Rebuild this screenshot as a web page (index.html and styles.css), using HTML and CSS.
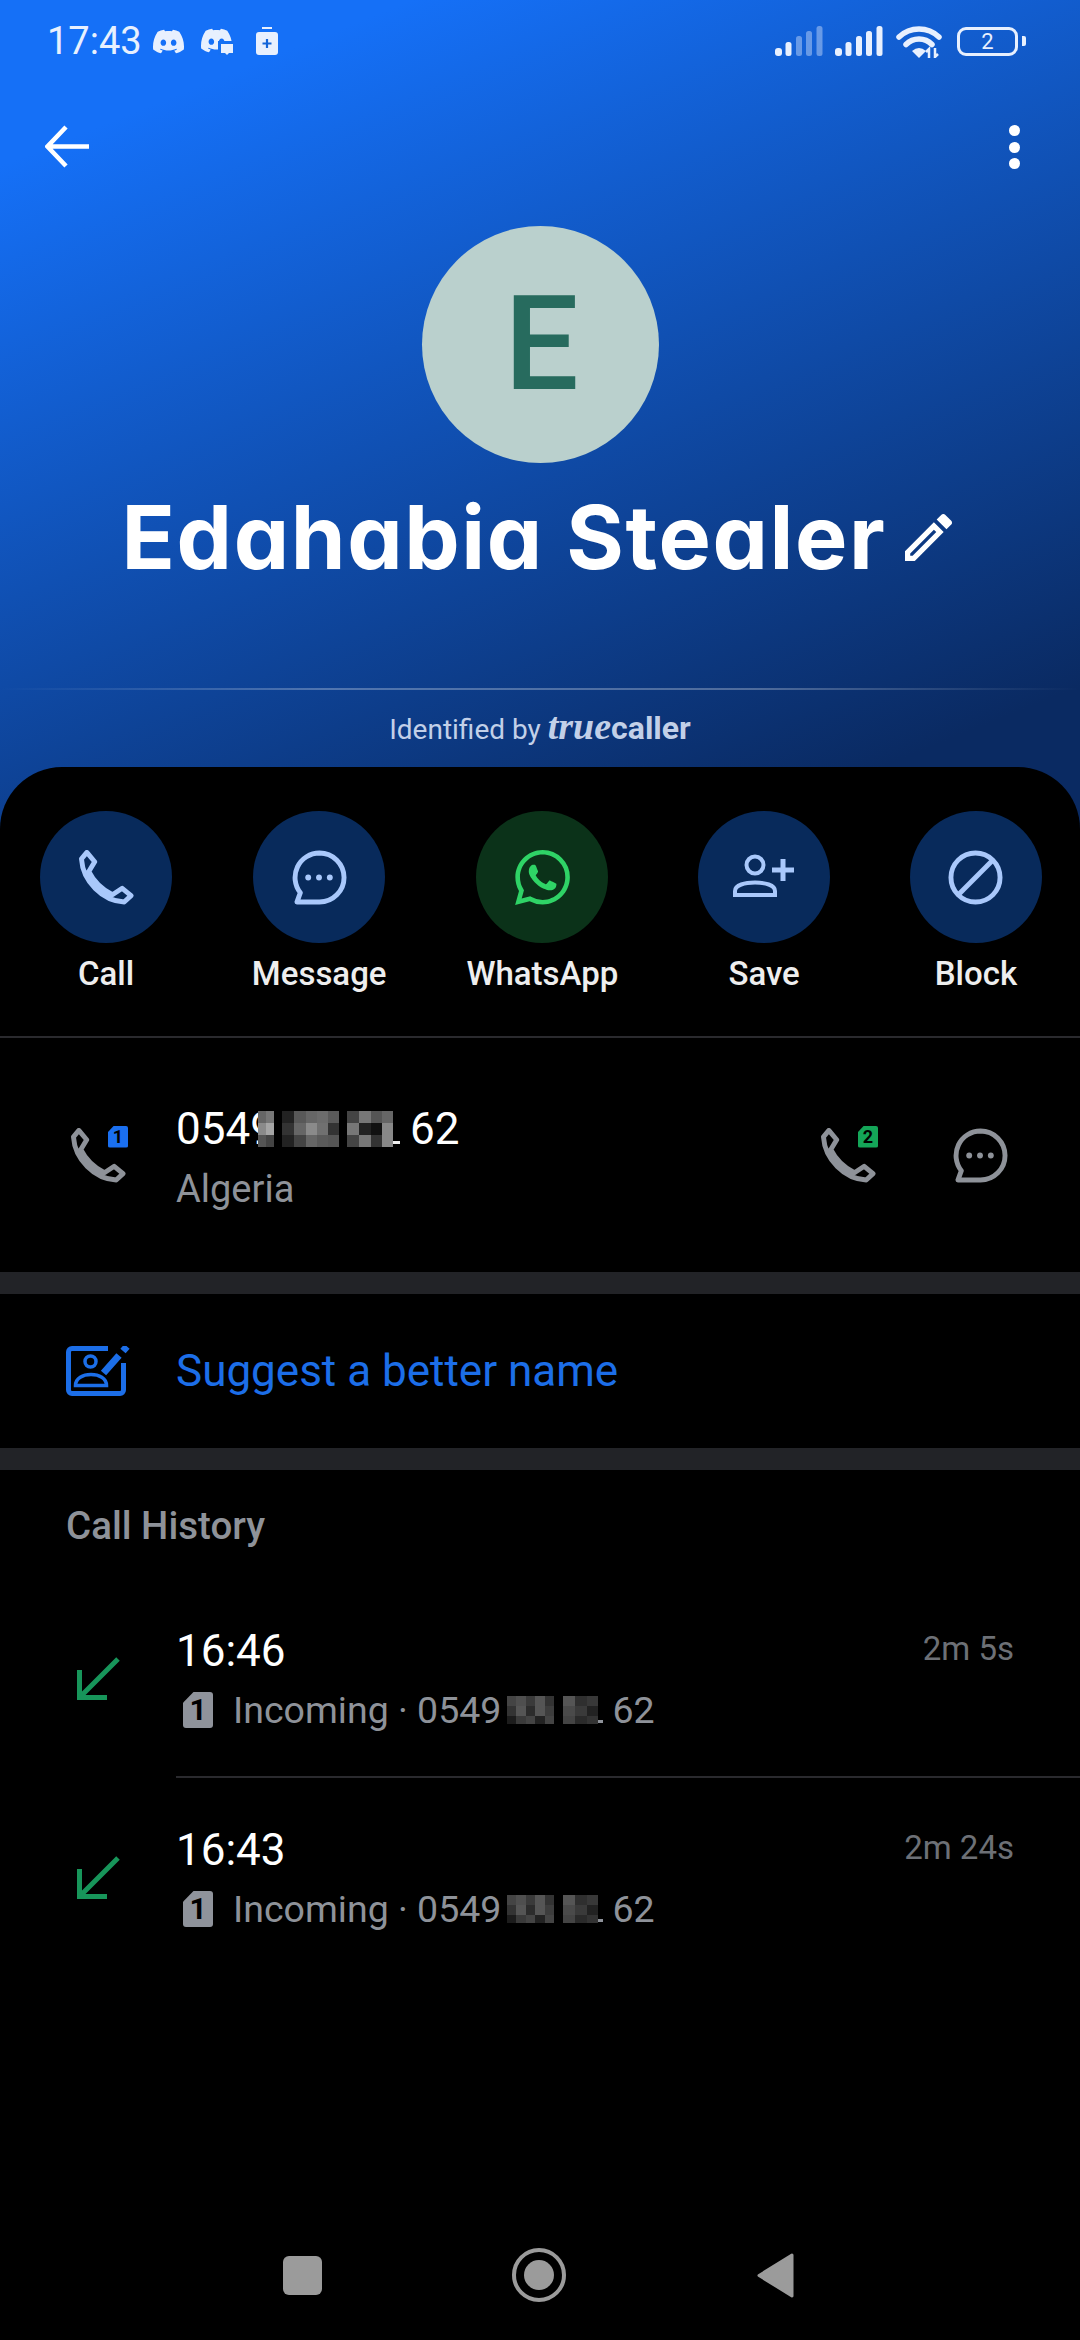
FILE: index.html
```html
<!DOCTYPE html>
<html lang="en">
<head>
    <meta charset="UTF-8">
    <title>Edahabia Stealer</title>
    <link rel="stylesheet" href="styles.css">
</head>
<body>
<svg class="sprite" xmlns="http://www.w3.org/2000/svg">
    <symbol id="phone" viewBox="0 0 56 56">
        <path d="M8 2.5L16 12L10 22C15 32 23 40 34 45.500L44 39L53 46.500L46 53C24 52 4 32 2.500 9Z" fill="none" stroke="currentColor" stroke-width="5" stroke-linejoin="round"/>
    </symbol>
    <symbol id="bubble" viewBox="0 0 56 56">
        <path d="M28 3A25 25 0 0 1 28 53L5 53L8.500 43.500A25 25 0 0 1 28 3Z" fill="none" stroke="currentColor" stroke-width="5" stroke-linejoin="round"/>
        <circle cx="16.500" cy="28" r="3" fill="currentColor"/>
        <circle cx="27.500" cy="28" r="3" fill="currentColor"/>
        <circle cx="38.500" cy="28" r="3" fill="currentColor"/>
    </symbol>
    <symbol id="discord" viewBox="0 0 24 24">
        <path fill="currentColor" d="M20.317 4.3698a19.7913 19.7913 0 00-4.8851-1.5152.0741.0741 0 00-.0785.0371c-.211.3753-.4447.8648-.6083 1.2495-1.8447-.2762-3.68-.2762-5.4868 0-.1636-.3933-.4058-.8742-.6177-1.2495a.077.077 0 00-.0785-.037 19.7363 19.7363 0 00-4.8852 1.515.0699.0699 0 00-.0321.0277C.5334 9.0458-.319 13.5799.0992 18.0578a.0824.0824 0 00.0312.0561c2.0528 1.5076 4.0413 2.4228 5.9929 3.0294a.0777.0777 0 00.0842-.0276c.4616-.6304.8731-1.2952 1.226-1.9942a.076.076 0 00-.0416-.1057c-.6528-.2476-1.2743-.5495-1.8722-.8923a.077.077 0 01-.0076-.1277c.1258-.0943.2517-.1923.3718-.2914a.0743.0743 0 01.0776-.0105c3.9278 1.7933 8.18 1.7933 12.0614 0a.0739.0739 0 01.0785.0095c.1202.099.246.1981.3728.2924a.077.077 0 01-.0066.1276 12.2986 12.2986 0 01-1.873.8914.0766.0766 0 00-.0407.1067c.3604.698.7719 1.3628 1.225 1.9932a.076.076 0 00.0842.0286c1.961-.6067 3.9495-1.5219 6.0023-3.0294a.077.077 0 00.0313-.0552c.5004-5.177-.8382-9.6739-3.5485-13.6604a.061.061 0 00-.0312-.0286zM8.02 15.3312c-1.1825 0-2.1569-1.0857-2.1569-2.419 0-1.3332.9555-2.4189 2.157-2.4189 1.2108 0 2.1757 1.0952 2.1568 2.419 0 1.3332-.9555 2.4189-2.1569 2.4189zm7.9748 0c-1.1825 0-2.1569-1.0857-2.1569-2.419 0-1.3332.9554-2.4189 2.1569-2.4189 1.2108 0 2.1757 1.0952 2.1568 2.419 0 1.3332-.946 2.4189-2.1568 2.4189Z"/>
    </symbol>
    <symbol id="bars" viewBox="0 0 48 30">
        <rect x="0" y="22" width="7" height="8" rx="3"/>
        <rect x="10.500" y="16" width="6" height="14" rx="2.500"/>
        <rect class="bar-dim" x="21" y="10" width="6" height="20" rx="2.500"/>
        <rect class="bar-dim" x="31" y="5" width="6" height="25" rx="2.500"/>
        <rect class="bar-dim" x="41.500" y="0" width="6" height="30" rx="2.500"/>
    </symbol>
    <symbol id="mosaic-big" viewBox="0 0 142 36">
        <rect x="0" y="0" width="8" height="12" fill="#666"/><rect x="8" y="0" width="8" height="12" fill="#777"/>
        <rect x="0" y="12" width="8" height="12" fill="#8a8a8a"/><rect x="8" y="12" width="8" height="12" fill="#a5a5a5"/>
        <rect x="0" y="24" width="8" height="12" fill="#555"/><rect x="8" y="24" width="8" height="12" fill="#444"/>
        <rect x="24" y="0" width="12" height="12" fill="#222"/><rect x="36" y="0" width="12" height="12" fill="#585858"/><rect x="48" y="0" width="11" height="12" fill="#666"/><rect x="59" y="0" width="11" height="12" fill="#6c6c6c"/><rect x="70" y="0" width="11" height="12" fill="#5a5a5a"/>
        <rect x="24" y="12" width="12" height="12" fill="#333"/><rect x="36" y="12" width="12" height="12" fill="#666"/><rect x="48" y="12" width="11" height="12" fill="#8a8a8a"/><rect x="59" y="12" width="11" height="12" fill="#707070"/><rect x="70" y="12" width="11" height="12" fill="#333"/>
        <rect x="24" y="24" width="12" height="12" fill="#222"/><rect x="36" y="24" width="12" height="12" fill="#444"/><rect x="48" y="24" width="11" height="12" fill="#666"/><rect x="59" y="24" width="11" height="12" fill="#5a5a5a"/><rect x="70" y="24" width="11" height="12" fill="#555"/>
        <rect x="89" y="0" width="12" height="12" fill="#444"/><rect x="101" y="0" width="12" height="12" fill="#777"/><rect x="113" y="0" width="11" height="12" fill="#555"/><rect x="124" y="0" width="11" height="12" fill="#666"/>
        <rect x="89" y="12" width="12" height="12" fill="#777"/><rect x="101" y="12" width="12" height="12" fill="#222"/><rect x="113" y="12" width="11" height="12" fill="#111"/><rect x="124" y="12" width="11" height="12" fill="#888"/>
        <rect x="89" y="24" width="12" height="12" fill="#444"/><rect x="101" y="24" width="12" height="12" fill="#777"/><rect x="113" y="24" width="11" height="12" fill="#333"/><rect x="124" y="24" width="11" height="12" fill="#888"/>
        <rect x="135" y="30" width="7" height="3" fill="#eee"/>
    </symbol>
    <symbol id="mosaic-small" viewBox="0 0 96 28">
        <rect x="0" y="0" width="9" height="10" fill="#444"/><rect x="9" y="0" width="10" height="10" fill="#4f4f4f"/><rect x="19" y="0" width="9" height="10" fill="#3a3a3a"/><rect x="28" y="0" width="10" height="10" fill="#555"/><rect x="38" y="0" width="9" height="10" fill="#333"/>
        <rect x="0" y="10" width="9" height="10" fill="#333"/><rect x="9" y="10" width="10" height="10" fill="#555"/><rect x="19" y="10" width="9" height="10" fill="#2c2c2c"/><rect x="28" y="10" width="10" height="10" fill="#555"/><rect x="38" y="10" width="9" height="10" fill="#3d3d3d"/>
        <rect x="0" y="20" width="9" height="8" fill="#1c1c1c"/><rect x="9" y="20" width="10" height="8" fill="#3a3a3a"/><rect x="19" y="20" width="9" height="8" fill="#444"/><rect x="28" y="20" width="10" height="8" fill="#222"/><rect x="38" y="20" width="9" height="8" fill="#444"/>
        <rect x="56" y="0" width="12" height="10" fill="#555"/><rect x="68" y="0" width="12" height="10" fill="#2f2f2f"/><rect x="80" y="0" width="11" height="10" fill="#383838"/>
        <rect x="56" y="10" width="12" height="10" fill="#4a4a4a"/><rect x="68" y="10" width="12" height="10" fill="#3a3a3a"/><rect x="80" y="10" width="11" height="10" fill="#222"/>
        <rect x="56" y="20" width="12" height="8" fill="#444"/><rect x="68" y="20" width="12" height="8" fill="#2a2a2a"/><rect x="80" y="20" width="11" height="8" fill="#333"/>
        <rect x="91" y="24" width="5" height="3" fill="#8f939b"/>
    </symbol>
</svg>

<div class="page">
    <div class="status">
        <span class="clock">17:43</span>
        <svg class="ic-discord"><use href="#discord"/></svg>
        <svg class="ic-discord2" viewBox="0 0 33 27">
            <use href="#discord" width="31" height="31" y="-3"/>
            <path class="cut" d="M17 13h16v14h-16z"/>
            <path d="M20 16h12v9h-4l-2 2-2-2h-4z" fill="currentColor"/>
        </svg>
        <svg class="ic-saver" viewBox="0 0 22 28">
            <rect x="6" y="0" width="10" height="2" fill="currentColor"/>
            <rect x="0" y="5" width="22" height="23" rx="3" fill="currentColor"/>
            <path d="M11 12v9M6.500 16.500h9" stroke="#1465d8" stroke-width="2.200"/>
        </svg>
        <div class="status-right">
            <svg class="ic-bars weak"><use href="#bars"/></svg>
            <svg class="ic-bars"><use href="#bars"/></svg>
            <svg class="ic-wifi" viewBox="0 0 46 34">
                <path d="M3 13A29 29 0 0 1 43 13M10 20.500A18 18 0 0 1 36 20.500" fill="none" stroke="currentColor" stroke-width="5.500" stroke-linecap="round"/>
                <path d="M16 27Q23 21 30 27L23 34Z" fill="currentColor"/>
                <path d="M33 34V25L30 28M39 24V33L42 30" fill="none" stroke="currentColor" stroke-width="2.500"/>
            </svg>
            <div class="battery">2</div>
            <div class="battery-tip"></div>
        </div>
    </div>

    <div class="toolbar">
        <svg class="ic-back" viewBox="0 0 44 44">
            <path d="M21 2L2.500 21.500L21 41M3 21.500H44" fill="none" stroke="currentColor" stroke-width="4.500"/>
        </svg>
        <div class="dots"><i></i><i></i><i></i></div>
    </div>

    <div class="avatar">E</div>

    <div class="name-row">
        <h1 class="name">Edahabia Stealer</h1>
        <svg class="ic-pencil" viewBox="3 3 18 18">
            <path fill="currentColor" d="M3 17.250V21h3.750L17.810 9.940l-3.750-3.750L3 17.250zM5.920 19H5v-.92l9.060-9.060.92.92L5.920 19zM20.710 5.630l-2.340-2.340c-.39-.39-1.020-.39-1.410 0l-1.830 1.830 3.750 3.750 1.830-1.830c.39-.39.39-1.020 0-1.410z"/>
        </svg>
    </div>

    <div class="hairline"></div>

    <div class="identified">Identified by <span class="brand"><b class="brand-true">true</b><b class="brand-caller">caller</b></span></div>

    <div class="sheet">
        <div class="actions">
            <div class="action">
                <div class="disc"><svg class="ic-55"><use href="#phone"/></svg></div>
                <span>Call</span>
            </div>
            <div class="action">
                <div class="disc"><svg class="ic-55"><use href="#bubble"/></svg></div>
                <span>Message</span>
            </div>
            <div class="action">
                <div class="disc disc-green">
                    <svg class="ic-55" viewBox="0 0 24 24"><path fill="currentColor" d="M17.472 14.382c-.297-.149-1.758-.867-2.030-.967-.273-.099-.471-.148-.670.150-.197.297-.767.966-.940 1.164-.173.199-.347.223-.644.075-.297-.150-1.255-.463-2.390-1.475-.883-.788-1.480-1.761-1.653-2.059-.173-.297-.018-.458.130-.606.134-.133.298-.347.446-.520.149-.174.198-.298.298-.497.099-.198.050-.371-.025-.520-.075-.149-.669-1.612-.916-2.207-.242-.579-.487-.500-.669-.510-.173-.008-.371-.010-.570-.010-.198 0-.520.074-.792.372-.272.297-1.040 1.016-1.040 2.479 0 1.462 1.065 2.875 1.213 3.074.149.198 2.096 3.200 5.077 4.487.709.306 1.262.489 1.694.625.712.227 1.360.195 1.871.118.571-.085 1.758-.719 2.006-1.413.248-.694.248-1.289.173-1.413-.074-.124-.272-.198-.570-.347m-5.421 7.403h-.004a9.870 9.870 0 01-5.031-1.378l-.361-.214-3.741.982.998-3.648-.235-.374a9.860 9.860 0 01-1.510-5.260c.001-5.450 4.436-9.884 9.888-9.884 2.640 0 5.122 1.030 6.988 2.898a9.825 9.825 0 012.893 6.994c-.003 5.450-4.437 9.884-9.885 9.884m8.413-18.297A11.815 11.815 0 0012.050 0C5.495 0 .160 5.335.157 11.892c0 2.096.547 4.142 1.588 5.945L.057 24l6.305-1.654a11.882 11.882 0 005.683 1.448h.005c6.554 0 11.890-5.335 11.893-11.893a11.821 11.821 0 00-3.480-8.413z"/></svg>
                </div>
                <span>WhatsApp</span>
            </div>
            <div class="action">
                <div class="disc">
                    <svg class="ic-save" viewBox="0 0 62 46">
                        <circle cx="22" cy="11" r="8.500" fill="none" stroke="currentColor" stroke-width="4"/>
                        <path d="M2 41V37C2 31 12 28.500 22 28.500C32 28.500 42 31 42 37V41Z" fill="none" stroke="currentColor" stroke-width="4"/>
                        <path d="M39 16H61M50 5V27" fill="none" stroke="currentColor" stroke-width="5"/>
                    </svg>
                </div>
                <span>Save</span>
            </div>
            <div class="action">
                <div class="disc">
                    <svg class="ic-55" viewBox="0 0 56 56">
                        <circle cx="28" cy="28" r="25" fill="none" stroke="currentColor" stroke-width="5"/>
                        <path d="M46 10L10 46" stroke="currentColor" stroke-width="5"/>
                    </svg>
                </div>
                <span>Block</span>
            </div>
        </div>

        <div class="contact">
            <div class="call-ic">
                <svg class="ic-55"><use href="#phone"/></svg>
                <span class="sim-badge">1</span>
            </div>
            <div class="contact-text">
                <div class="number">
                    <span>0549</span>
                    <svg class="mosaic"><use href="#mosaic-big"/></svg>
                    <span class="tail">62</span>
                </div>
                <div class="country">Algeria</div>
            </div>
            <div class="contact-side">
                <div class="call-ic">
                    <svg class="ic-55"><use href="#phone"/></svg>
                    <span class="sim-badge sim-two">2</span>
                </div>
                <svg class="ic-55"><use href="#bubble"/></svg>
            </div>
        </div>

        <div class="band"></div>

        <div class="suggest">
            <svg class="ic-suggest" viewBox="0 0 65 50">
                <path d="M42 2.500H6A3.500 3.500 0 0 0 2.500 6V44A3.500 3.500 0 0 0 6 47.500H54A3.500 3.500 0 0 0 57.500 44V17" fill="none" stroke="currentColor" stroke-width="5"/>
                <circle cx="24.500" cy="15.500" r="5.500" fill="none" stroke="currentColor" stroke-width="3.500"/>
                <path d="M9.500 39.500C9.500 32 17 28.500 25 28.500C33 28.500 40.500 32 40.500 39.500Z" fill="none" stroke="currentColor" stroke-width="3.500"/>
                <path d="M37.500 27L53 9.500M57 5L61 .5" fill="none" stroke="currentColor" stroke-width="7"/>
            </svg>
            <span>Suggest a better name</span>
        </div>

        <div class="band"></div>

        <div class="history-head">Call History</div>

        <div class="call">
            <div class="call-dir">
                <svg class="ic-arrow" viewBox="0 0 43 43"><path d="M41 2L5 38M2.500 13V40.500H30" fill="none" stroke="currentColor" stroke-width="5"/></svg>
            </div>
            <div class="call-body call-line">
                <div class="call-top"><span class="call-time">16:46</span><span class="call-len">2m 5s</span></div>
                <div class="call-sub">
                    <span class="sim">1</span>
                    <span>Incoming · 0549</span>
                    <svg class="mosaic-sm"><use href="#mosaic-small"/></svg>
                    <span class="tail-sm">62</span>
                </div>
            </div>
        </div>

        <div class="call">
            <div class="call-dir">
                <svg class="ic-arrow" viewBox="0 0 43 43"><path d="M41 2L5 38M2.500 13V40.500H30" fill="none" stroke="currentColor" stroke-width="5"/></svg>
            </div>
            <div class="call-body">
                <div class="call-top"><span class="call-time">16:43</span><span class="call-len">2m 24s</span></div>
                <div class="call-sub">
                    <span class="sim">1</span>
                    <span>Incoming · 0549</span>
                    <svg class="mosaic-sm"><use href="#mosaic-small"/></svg>
                    <span class="tail-sm">62</span>
                </div>
            </div>
        </div>

        <div class="navbar">
            <div class="nav-square"></div>
            <div class="nav-home"><i></i></div>
            <svg class="nav-back" viewBox="0 0 37 45"><path d="M35 2L2 22.500L35 43Z" fill="#9b9b9b" stroke="#9b9b9b" stroke-width="3" stroke-linejoin="round"/></svg>
        </div>
    </div>
</div>
</body>
</html>
```

FILE: styles.css
```css
html, body {
    margin: 0;
    padding: 0;
    background: #000;
}
h1 {
    margin: 0;
}
.sprite {
    display: none;
}
.page {
    width: 1080px;
    height: 2340px;
    display: flex;
    flex-direction: column;
    font-family: Roboto, "Noto Sans", sans-serif;
    color: #fff;
    background: #000 linear-gradient(158deg, #1570f7 13%, #0a2a62 88%) no-repeat;
    background-size: 100% 840px;
    overflow: hidden;
}

/* status bar */
.status {
    height: 82px;
    flex: none;
    display: flex;
    align-items: center;
    padding: 0 54px 0 47px;
    color: #e8f0fe;
}
.clock {
    font-size: 38px;
    line-height: 40px;
}
.ic-discord {
    width: 31px;
    height: 31px;
    margin-left: 11px;
}
.ic-discord2 {
    width: 33px;
    height: 27px;
    margin-left: 17px;
}
.ic-discord2 .cut {
    fill: #1570f3;
}
.ic-saver {
    width: 22px;
    height: 28px;
    margin-left: 22px;
}
.status-right {
    margin-left: auto;
    display: flex;
    align-items: center;
}
.ic-bars {
    width: 48px;
    height: 30px;
    margin-right: 12px;
    fill: currentColor;
}
.ic-bars.weak {
    --dim: 0.4;
}
.bar-dim {
    opacity: var(--dim, 1);
}
.ic-wifi {
    width: 46px;
    height: 34px;
    margin: 0 15px 0 1px;
}
.battery {
    box-sizing: border-box;
    width: 61px;
    height: 29px;
    border: 3px solid #e8f0fe;
    border-radius: 9px;
    font-size: 22px;
    line-height: 23px;
    text-align: center;
}
.battery-tip {
    width: 4px;
    height: 10px;
    margin-left: 4px;
    background: #e8f0fe;
    border-radius: 0 2px 2px 0;
}

/* top bar */
.toolbar {
    flex: none;
    margin-top: 43px;
    height: 44px;
    display: flex;
    justify-content: space-between;
    align-items: center;
    padding: 0 60px 0 45px;
}
.ic-back {
    width: 44px;
    height: 44px;
}
.dots {
    display: flex;
    flex-direction: column;
    gap: 5.5px;
}
.dots i {
    display: block;
    width: 11px;
    height: 11px;
    border-radius: 50%;
    background: #fff;
}

/* profile */
.avatar {
    flex: none;
    width: 237px;
    height: 237px;
    margin: 57px auto 0;
    border-radius: 50%;
    background: #bad0cd;
    color: #276b5e;
    font-size: 132px;
    font-weight: 500;
    line-height: 237px;
    text-align: center;
    text-indent: 3px;
}
.name-row {
    flex: none;
    margin-top: 24px;
    padding-right: 6px;
    display: flex;
    justify-content: center;
    align-items: center;
    gap: 19px;
}
.name {
    font-family: Inter, "Noto Sans", sans-serif;
    font-feature-settings: "cv11" 1;
    font-size: 88px;
    font-weight: 700;
    line-height: 100px;
    letter-spacing: 1.6px;
    white-space: nowrap;
}
.ic-pencil {
    width: 47px;
    height: 47px;
}
.hairline {
    flex: none;
    height: 2px;
    margin-top: 101px;
    background: linear-gradient(90deg, rgba(255,255,255,0), rgba(255,255,255,0.28) 30%, rgba(255,255,255,0.28) 70%, rgba(255,255,255,0));
}
.identified {
    flex: none;
    margin-top: 18px;
    height: 36px;
    line-height: 36px;
    font-size: 28px;
    color: #c2d0e8;
    text-align: center;
}
.brand-true {
    font-family: "Liberation Serif", serif;
    font-style: italic;
    font-size: 38px;
}
.brand-caller {
    font-size: 32px;
    font-weight: 700;
}

/* black sheet */
.sheet {
    flex: 1;
    margin-top: 23px;
    background: #000;
    border-radius: 62px 62px 0 0;
    display: flex;
    flex-direction: column;
}
.actions {
    display: flex;
    justify-content: space-between;
    padding: 44px 38px 43px 40px;
    border-bottom: 2px solid #2a2a2e;
}
.action {
    min-width: 132px;
    display: flex;
    flex-direction: column;
    align-items: center;
    font-size: 33px;
    font-weight: 500;
    line-height: 38px;
    color: #eee;
}
.action span {
    margin-top: 12px;
    white-space: nowrap;
}
.disc {
    width: 132px;
    height: 132px;
    border-radius: 50%;
    background: #082a5b;
    color: #a9c8fb;
    display: flex;
    justify-content: center;
    align-items: center;
}
.disc-green {
    background: #0b3219;
    color: #2fd366;
}
.ic-55 {
    width: 55px;
    height: 55px;
}
.ic-save {
    width: 62px;
    height: 46px;
}

/* number row */
.contact {
    height: 234px;
    flex: none;
    box-sizing: border-box;
    display: flex;
    align-items: center;
    padding: 0 72px 0 71px;
    color: #8e9299;
}
.call-ic {
    position: relative;
    width: 55px;
    height: 55px;
}
.sim-badge {
    position: absolute;
    top: -2px;
    right: -2px;
    width: 20px;
    height: 22px;
    border-radius: 2px;
    background: #1a6ff0;
    clip-path: polygon(30% 0, 100% 0, 100% 100%, 0 100%, 0 30%);
    color: #000;
    font-size: 18px;
    font-weight: 700;
    line-height: 22px;
    text-align: center;
}
.sim-two {
    background: #14a558;
}
.contact-text {
    margin: 5px 0 0 50px;
}
.number {
    display: flex;
    align-items: center;
    font-size: 44px;
    line-height: 50px;
    color: #fff;
}
.mosaic {
    width: 142px;
    height: 36px;
    margin-left: -17px;
}
.tail {
    margin-left: 10px;
}
.country {
    margin-top: 13px;
    font-size: 38px;
    line-height: 44px;
}
.contact-side {
    margin-left: auto;
    display: flex;
    align-items: center;
    gap: 77px;
}

.band {
    flex: none;
    height: 22px;
    background: #222327;
}

/* suggest */
.suggest {
    height: 154px;
    flex: none;
    display: flex;
    align-items: center;
    gap: 45px;
    padding-left: 66px;
    font-size: 44px;
    color: #1c6ee8;
}
.ic-suggest {
    width: 65px;
    height: 50px;
}

/* history */
.history-head {
    flex: none;
    padding: 34px 0 31px 66px;
    font-size: 38.5px;
    font-weight: 500;
    line-height: 44px;
    color: #8e9299;
}
.call {
    flex: none;
    display: flex;
}
.call-dir {
    width: 176px;
    flex: none;
    box-sizing: border-box;
    padding-left: 77px;
    display: flex;
    align-items: center;
    color: #17955a;
}
.ic-arrow {
    width: 43px;
    height: 43px;
}
.call-body {
    flex: 1;
    padding: 47px 66px 46px 0;
}
.call-line {
    border-bottom: 2px solid #2a2a2e;
    padding-bottom: 44px;
}
.call-top {
    display: flex;
    justify-content: space-between;
    align-items: flex-start;
}
.call-time {
    font-size: 44px;
    line-height: 50px;
}
.call-len {
    font-size: 33px;
    line-height: 46px;
    color: #6d7076;
}
.call-sub {
    margin-top: 12px;
    display: flex;
    align-items: center;
    font-size: 37.5px;
    line-height: 44px;
    color: #8e9299;
}
.sim {
    width: 30px;
    height: 36px;
    margin: 0 20px 0 7px;
    border-radius: 3px;
    background: #8f939b;
    clip-path: polygon(35% 0, 100% 0, 100% 100%, 0 100%, 0 30%);
    color: #000;
    font-size: 30px;
    font-weight: 700;
    line-height: 36px;
    text-align: center;
}
.mosaic-sm {
    width: 96px;
    height: 28px;
    margin-left: 6px;
}
.tail-sm {
    margin-left: 9px;
}

/* nav bar */
.navbar {
    margin-top: auto;
    padding: 0 4px 38px 0;
    display: flex;
    justify-content: center;
    align-items: center;
    gap: 190px;
}
.nav-square {
    width: 39px;
    height: 39px;
    border-radius: 6px;
    background: #9b9b9b;
}
.nav-home {
    box-sizing: border-box;
    width: 54px;
    height: 54px;
    border: 4px solid #9b9b9b;
    border-radius: 50%;
    display: flex;
    justify-content: center;
    align-items: center;
}
.nav-home i {
    display: block;
    width: 30px;
    height: 30px;
    border-radius: 50%;
    background: #9b9b9b;
}
.nav-back {
    width: 37px;
    height: 45px;
    margin-left: 1px;
}
```
